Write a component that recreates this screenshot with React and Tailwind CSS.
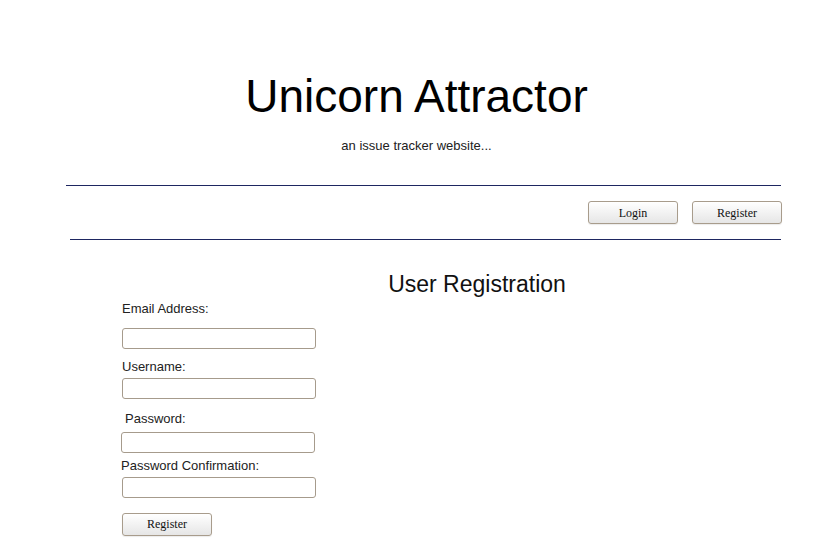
import React from 'react';

const Btn = ({ children }) => (
  <button
    type="button"
    className="w-[90px] h-[23px] rounded-[3px] border border-[#a89c8c] bg-gradient-to-b from-white to-[#e6e6e6] text-[12px] text-[#111] shadow-[0_1px_1px_rgba(0,0,0,0.08)]"
    style={{ fontFamily: '"Liberation Serif", serif' }}
  >
    {children}
  </button>
);

const Field = ({ className = '' }) => (
  <input
    type="text"
    className={`block w-[194px] h-[21px] rounded-[3px] border border-[#a69b8c] bg-white px-1 text-[13px] outline-none ${className}`}
  />
);

export default function App() {
  return (
    <div
      className="min-h-screen bg-white text-black"
      style={{ fontFamily: '"Liberation Sans", Arial, sans-serif' }}
    >
      {/* header */}
      <header className="pt-[70px] pl-[6px] text-center">
        <h1 className="text-[46px] leading-[52px]">Unicorn Attractor</h1>
        <p className="mt-[16px] text-[13px] leading-[15px] text-[#222]">an issue tracker website...</p>
      </header>

      <hr className="mt-[32px] ml-[66px] mr-[46px] border-0 border-t border-[#1e2761]" />

      <nav className="mt-[15px] mr-[45px] flex justify-end gap-[14px]">
        <Btn>Login</Btn>
        <Btn>Register</Btn>
      </nav>

      <hr className="mt-[15px] ml-[70px] mr-[46px] border-0 border-t border-[#1e2761]" />

      {/* registration form */}
      <main>
        <h2 className="mt-[30px] pl-[127px] text-center text-[23px] leading-[28px] text-[#111]">User Registration</h2>

        <form className="pl-[122px] text-[13px] leading-[15px] text-[#222]">
          <label className="block mt-[3px]">Email Address:</label>
          <Field className="mt-[12px]" />

          <label className="block mt-[10px]">Username:</label>
          <Field className="mt-[4px]" />

          <label className="block mt-[12px] pl-[3px]">Password:</label>
          <Field className="mt-[6px] -ml-[1px]" />

          <label className="block mt-[5px] -ml-[1px]">Password Confirmation:</label>
          <Field className="mt-[4px]" />

          <div className="mt-[15px]">
            <Btn>Register</Btn>
          </div>
        </form>
      </main>
    </div>
  );
}
